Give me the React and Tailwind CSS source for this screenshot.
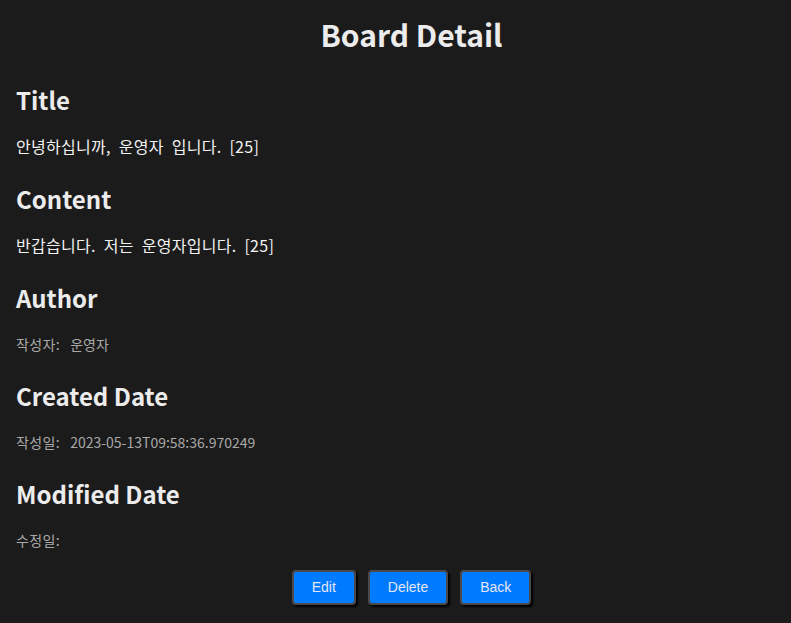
import React from 'react';

const board = {
  title: '안녕하십니까, 운영자 입니다. [25]',
  content: '반갑습니다. 저는 운영자입니다. [25]',
  author: '운영자',
  createdDate: '2023-05-13T09:58:36.970249',
  modifiedDate: '',
};

function Section({ heading, children, first }) {
  return (
    <section className={first ? 'mt-[30px]' : 'mt-[25px]'}>
      <h2 className="text-[24px] leading-[32px] font-bold text-[#ececec]">{heading}</h2>
      {children}
    </section>
  );
}

function Field({ label, value }) {
  return (
    <p className="mt-[20px] text-[14px] leading-[21px] text-[#a9a9a9]">
      <span className="mr-[10px] tracking-[0.4px]">{label}</span>
      <span>{value}</span>
    </p>
  );
}

function ActionButton({ children }) {
  return (
    <button className="h-[35px] px-[18px] rounded-[4px] border-2 border-[#4a4a4a] bg-[#007bff] text-[14px] text-[#e6e6f5] shadow-[2px_2px_2px_#000] font-['Liberation_Sans',Arial,sans-serif]">
      {children}
    </button>
  );
}

export default function App() {
  return (
    <div className="min-h-screen w-full overflow-hidden bg-[#1b1b1b] font-['Noto_Sans_CJK_KR','Noto_Sans',sans-serif] text-[#f2f2f2]">
      <div className="ml-4 w-[791px] pt-[14px] pb-4">
        <h1 className="text-center text-[30px] leading-[40px] font-bold text-[#ececec]">Board Detail</h1>

        <Section heading="Title" first>
          <p className="mt-[18px] text-[16px] leading-[24px] tracking-[0.3px] [word-spacing:4px]">{board.title}</p>
        </Section>

        <Section heading="Content">
          <p className="mt-[18px] text-[16px] leading-[24px] tracking-[0.3px] [word-spacing:4px]">{board.content}</p>
        </Section>

        <Section heading="Author">
          <Field label="작성자:" value={board.author} />
        </Section>

        <Section heading="Created Date">
          <Field label="작성일:" value={board.createdDate} />
        </Section>

        <Section heading="Modified Date">
          <Field label="수정일:" value={board.modifiedDate} />
        </Section>

        <div className="mt-[19px] flex justify-center gap-3">
          <ActionButton>Edit</ActionButton>
          <ActionButton>Delete</ActionButton>
          <ActionButton>Back</ActionButton>
        </div>
      </div>
    </div>
  );
}
